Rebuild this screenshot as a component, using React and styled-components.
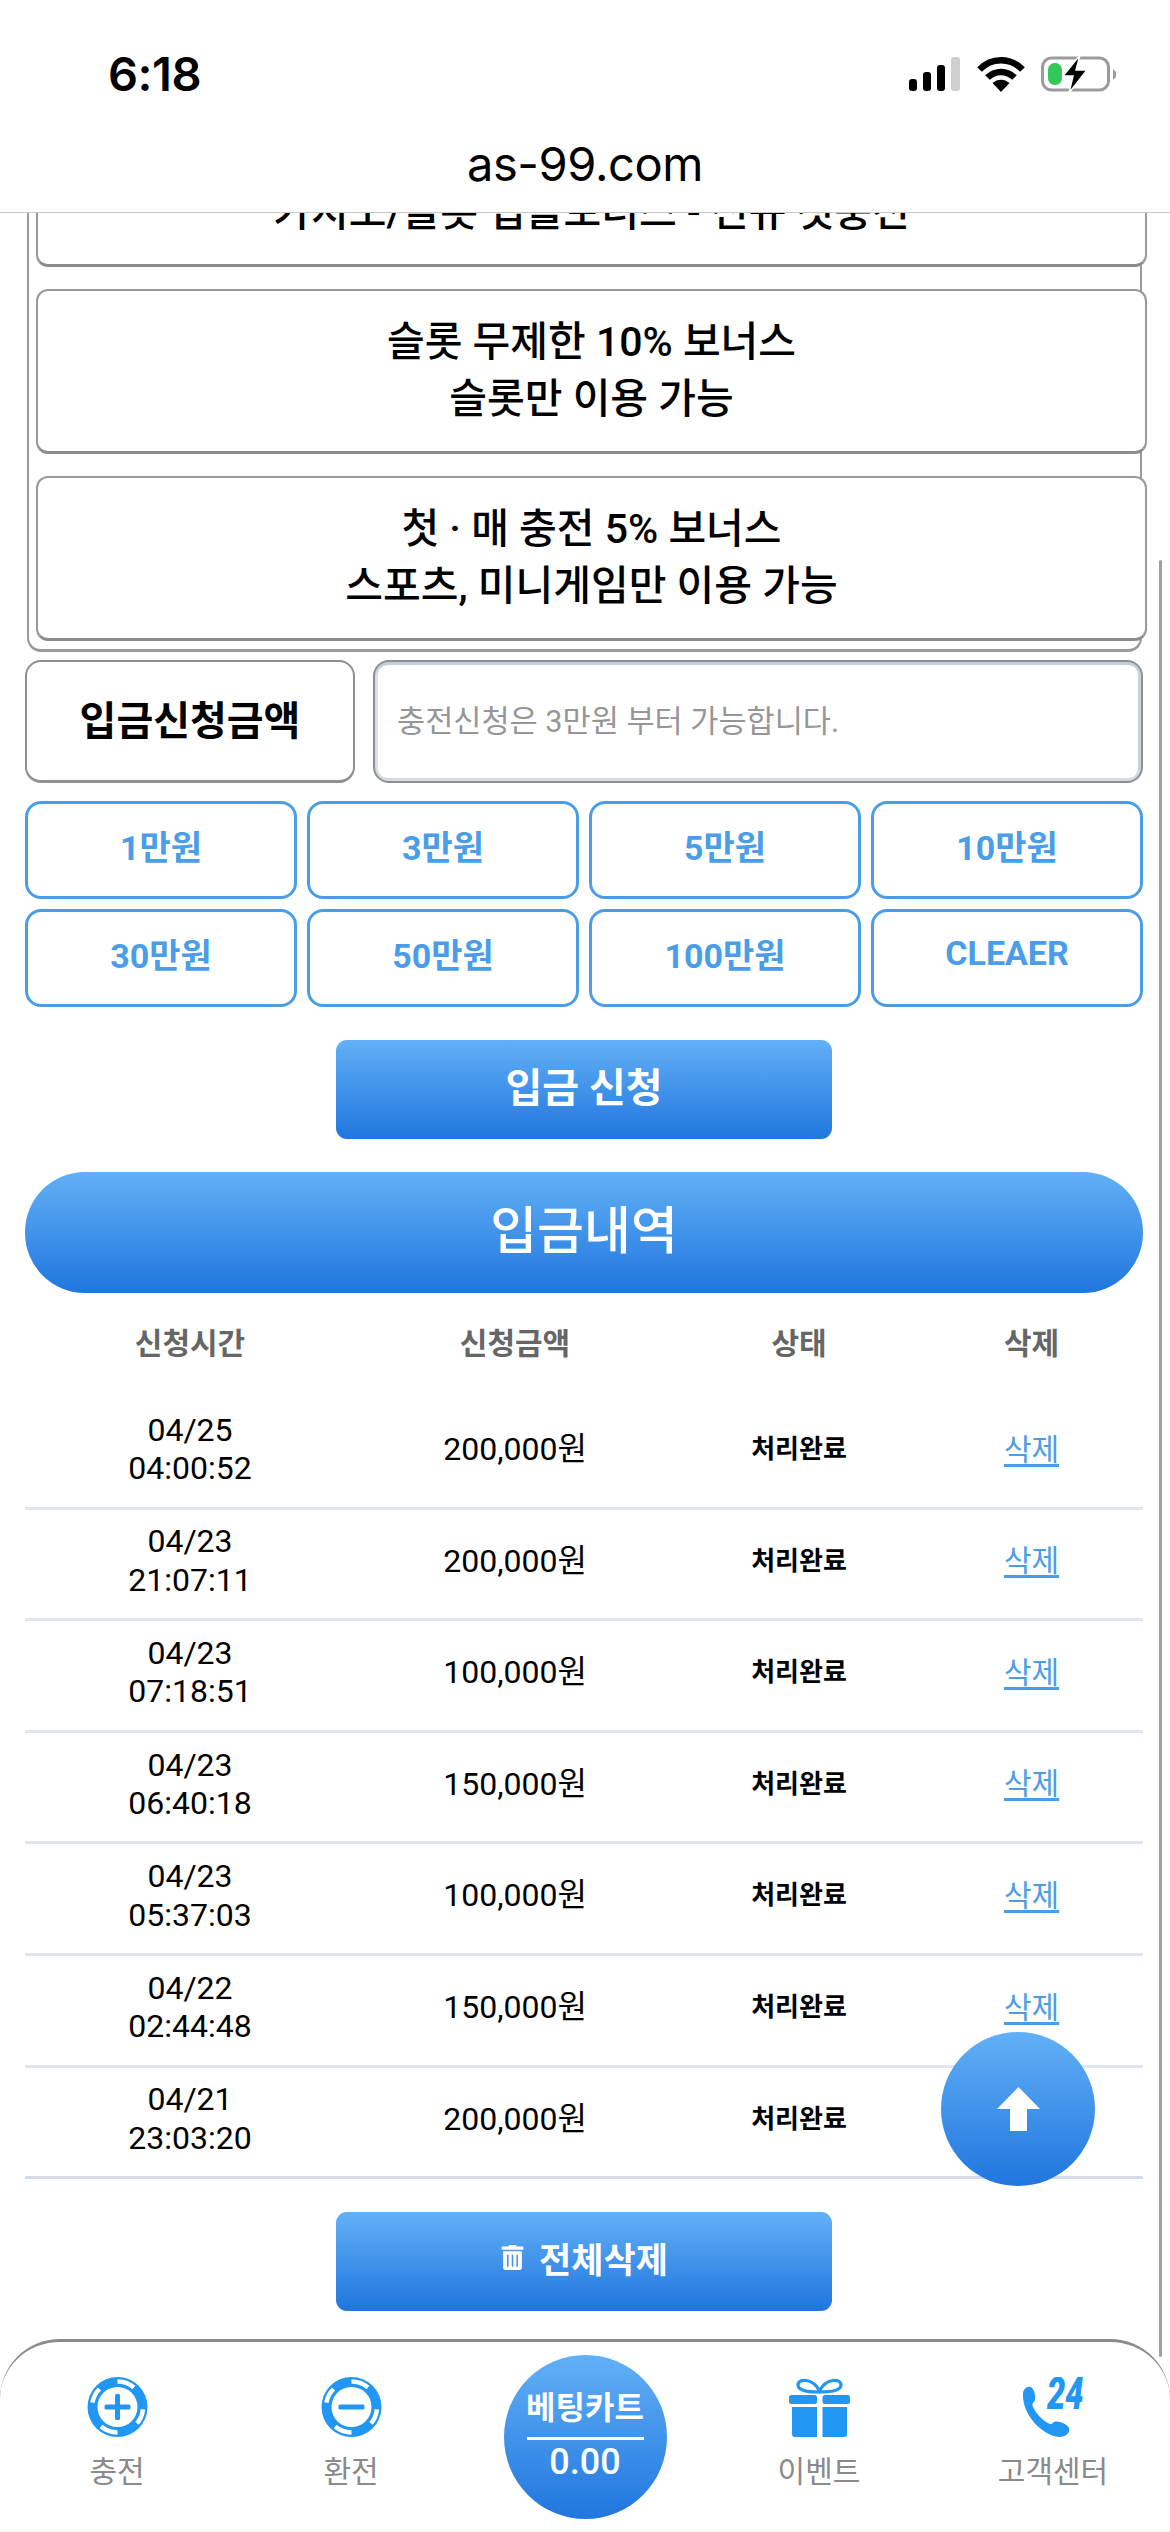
import React from "react";
import styled, { createGlobalStyle } from "styled-components";
import { FaTrashAlt } from "react-icons/fa";

const FONT = `Roboto, "Noto Sans CJK KR", sans-serif`;
const GRAD = "linear-gradient(180deg, #62b0f6 0%, #2076de 100%)";
const BLUE = "#4a9de9";
const ICON = "#2196f3";

const Global = createGlobalStyle`
  html, body { margin: 0; padding: 0; background: #fff; }
  * { box-sizing: border-box; }
  body { font-family: ${FONT}; color: #000; }
`;

const Screen = styled.div`
  position: relative;
  width: 1170px;
  height: 2532px;
  overflow: hidden;
  display: flex;
  flex-direction: column;
  background: #fff;
`;
const BrowserChrome = styled.header`
  height: 213px;
  flex: none;
  background: #fff;
  border-bottom: 1px solid #c9c9c9;
  position: relative;
  z-index: 2;
`;
const StatusBar = styled.div`
  height: 130px;
  padding: 50px 53px 0 108px;
  display: flex;
  justify-content: space-between;
  align-items: flex-start;
`;
const Clock = styled.div`
  font: 600 47px/48px Inter, sans-serif;
  letter-spacing: -0.5px;
`;
const StatusIcons = styled.div`
  display: flex;
  align-items: center;
  gap: 16px;
  margin-top: 5px;
`;
const Address = styled.div`
  text-align: center;
  font: 400 47px/54px Inter, sans-serif;
  letter-spacing: -0.4px;
  margin-top: 7px;
`;
const Scroller = styled.main`
  flex: 1;
  min-height: 0;
  overflow: hidden;
`;
const Page = styled.div`
  margin-top: -111px;
  width: 1143px;
  padding-left: 25px;
`;
const BonusPanel = styled.section`
  margin: 0 1px 0 2px;
  padding: 0 0 8px 7px;
  border: 2px solid #9a9a9a;
  border-top: 0;
  border-bottom-width: 3px;
  border-radius: 0 0 14px 14px;
`;
const BonusList = styled.div`
  display: flex;
  flex-direction: column;
  gap: 22px;
  margin-right: -7px;
`;
const BonusCard = styled.div`
  height: 165px;
  border: 2px solid #9a9a9a;
  border-bottom: 3px solid #8c8c8c;
  border-radius: 12px;
  background: #fff;
  display: flex;
  flex-direction: column;
  align-items: center;
  justify-content: center;
  font-size: 41px;
  line-height: 57px;
  font-weight: 500;
`;
const FormRow = styled.div`
  display: grid;
  grid-template-columns: 330px 1fr;
  gap: 18px;
  height: 123px;
  margin-top: 8px;
`;
const AmountLabel = styled.div`
  border: 2px solid #8f8f8f;
  border-bottom-width: 3px;
  border-radius: 16px;
  display: flex;
  align-items: center;
  justify-content: center;
  font-size: 40px;
  font-weight: 700;
  padding-bottom: 6px;
`;
const AmountInput = styled.input`
  width: 100%;
  height: 100%;
  border: 2px solid #8f8f8f;
  border-radius: 16px;
  box-shadow: inset 0 3px 0 #c4cfdd, inset 0 -3px 0 #d4dbe5, inset 3px 0 0 #dbe1ea, inset -3px 0 0 #c9d2df;
  background: #fff;
  padding: 0 20px 0 22px;
  font: 400 30.6px ${FONT};
  outline: none;
  &::placeholder { color: #969696; opacity: 1; }
`;
const PresetGrid = styled.div`
  display: grid;
  grid-template-columns: repeat(4, 1fr);
  grid-auto-rows: 98px;
  gap: 10px;
  margin-top: 18px;
`;
const Preset = styled.button`
  border: 3px solid ${BLUE};
  border-radius: 16px;
  background: #fff;
  color: ${BLUE};
  font: 700 34px ${FONT};
  padding: 0 0 10px;
`;
const GradientButton = styled.button`
  display: flex;
  align-items: center;
  justify-content: center;
  gap: 14px;
  width: 496px;
  height: 99px;
  margin: ${(p) => p.$mt}px auto 0;
  border: 0;
  border-radius: 11px;
  background: ${GRAD};
  color: #fff;
  font: 700 ${(p) => p.$size}px ${FONT};
  padding: 0 0 9px;
`;
const HistoryTitle = styled.h2`
  margin: 33px 0 0;
  height: 121px;
  border-radius: 60px;
  background: ${GRAD};
  color: #fff;
  font-size: 51px;
  font-weight: 500;
  display: flex;
  align-items: center;
  justify-content: center;
  padding-bottom: 11px;
`;
const COLS = "330px 320px 248px 217px";
const TableHead = styled.div`
  display: grid;
  grid-template-columns: ${COLS};
  height: 105px;
  align-items: center;
  text-align: center;
  color: #666;
  font-size: 30px;
  font-weight: 700;
  padding-bottom: 10px;
`;
const Row = styled.div`
  display: grid;
  grid-template-columns: ${COLS};
  height: 111.6px;
  align-items: center;
  text-align: center;
  border-bottom: 3px solid ${(p) => (p.$last ? "#d3dbe5" : "#e0e7f0")};
  padding-bottom: 6px;
  font-size: 32px;
  line-height: 38.5px;
`;
const Status = styled.div`
  font-size: 26px;
  font-weight: 700;
`;
const DeleteLink = styled.a`
  color: ${BLUE};
  font-size: 30px;
  text-decoration: underline;
  text-underline-offset: 4px;
`;
const BottomNav = styled.nav`
  flex: none;
  height: 193px;
  position: relative;
  z-index: 2;
  background: #fff;
  border-top: 3px solid #8a8a8a;
  border-bottom: 2px solid #f5f5f5;
  border-radius: 60px 60px 0 0;
  display: grid;
  grid-template-columns: repeat(5, 1fr);
  padding-top: 13px;
`;
const Tab = styled.div`
  display: flex;
  flex-direction: column;
  align-items: center;
  padding-top: 22px;
`;
const TabLabel = styled.span`
  margin-top: 15px;
  font-size: 30px;
  line-height: 40px;
  color: #8a8a8a;
`;
const CartCircle = styled.div`
  justify-self: center;
  width: 163px;
  height: 164px;
  border-radius: 50%;
  background: ${GRAD};
  color: #fff;
  display: flex;
  flex-direction: column;
  align-items: center;
  padding-top: 33px;
`;
const CartTitle = styled.div`
  font-size: 32px;
  font-weight: 700;
  line-height: 40px;
`;
const CartRule = styled.div`
  width: 117px;
  height: 3px;
  margin-top: 9px;
  background: #fff;
`;
const CartValue = styled.div`
  font-size: 36px;
  font-weight: 500;
  line-height: 44px;
`;
const TopButton = styled.button`
  position: absolute;
  left: 941px;
  top: 2032px;
  z-index: 1;
  width: 154px;
  height: 154px;
  border: 0;
  border-radius: 50%;
  background: ${GRAD};
  display: flex;
  align-items: center;
  justify-content: center;
  padding: 0;
`;
const ScrollThumb = styled.div`
  position: absolute;
  left: 1159px;
  top: 560px;
  width: 3px;
  height: 1797px;
  border-radius: 2px;
  background: #a0a0a0;
  z-index: 3;
`;

const Signal = () => (
  <svg width="52" height="34" viewBox="0 0 52 34">
    <rect x="0" y="22" width="8" height="12" rx="3" fill="#000" />
    <rect x="14" y="15" width="8" height="19" rx="3" fill="#000" />
    <rect x="28" y="8" width="8" height="26" rx="3" fill="#000" />
    <rect x="42" y="0" width="9" height="34" rx="3" fill="#cfcfcf" />
  </svg>
);
const Wifi = () => (
  <svg width="48" height="36" viewBox="0 0 48 36" fill="none" stroke="#000" strokeWidth="6.5">
    <path d="M2.5 13.5C14.5 1 33.5 1 45.5 13.5" />
    <path d="M10.5 21.5C18 14 30 14 37.5 21.5" />
    <path d="M24 36L15.5 27C20.5 22.5 27.5 22.5 32.5 27Z" fill="#000" stroke="none" />
  </svg>
);
const Battery = () => (
  <svg width="76" height="38" viewBox="0 0 76 38">
    <rect x="1.5" y="3" width="66" height="32" rx="9" fill="none" stroke="#9b9b9b" strokeWidth="3" />
    <path d="M72 14l3 3v5l-3 3z" fill="#9b9b9b" />
    <rect x="7" y="8" width="14" height="22" rx="6.5" fill="#34c759" />
    <path d="M39 0L22 21H32L28 38L46 15H35Z" fill="#000" stroke="#fff" strokeWidth="1.5" />
  </svg>
);

const arc = (r, a, b, cx = 30.5, cy = 30) => {
  const rad = (d) => (d * Math.PI) / 180;
  const p = (d) => `${(cx + r * Math.cos(rad(d))).toFixed(2)} ${(cy + r * Math.sin(rad(d))).toFixed(2)}`;
  return `M${p(a)}A${r} ${r} 0 0 1 ${p(b)}`;
};
const ChipIcon = ({ plus }) => (
  <svg width="61" height="60" viewBox="0 0 61 60">
    <circle cx="30.5" cy="30" r="30" fill={ICON} />
    <circle cx="30.5" cy="30" r="20" fill="#fff" />
    {[[-90, -50], [5, 40], [90, 130], [190, 225]].map(([a, b]) => (
      <path key={a} d={arc(25.5, a, b)} fill="none" stroke="#fff" strokeWidth="4.5" />
    ))}
    <rect x="17.5" y="27.5" width="26" height="5" rx="1.5" fill={ICON} />
    {plus && <rect x="28" y="17" width="5" height="26" rx="1.5" fill={ICON} />}
  </svg>
);
const GiftIcon = () => (
  <svg width="61" height="60" viewBox="0 0 61 60">
    <path d="M30.5 15C24 15 9 15 9 8C9 1 24 1 30.5 14C37 1 52 1 52 8C52 15 37 15 30.5 15Z" fill="none" stroke={ICON} strokeWidth="3.2" />
    <rect x="0" y="18" width="28" height="9" rx="2.5" fill={ICON} />
    <rect x="33.5" y="18" width="27.5" height="9" rx="2.5" fill={ICON} />
    <path d="M3 30H28V60H6Q3 60 3 57Z" fill={ICON} />
    <path d="M33.5 30H58V57Q58 60 55 60H33.5Z" fill={ICON} />
  </svg>
);
const PhoneIcon = () => (
  <svg width="62" height="60" viewBox="0 0 62 60">
    <path d="M1 17C1 12 5 9 8.5 10C12 11 14 19 13 23C12.5 25 10 26 10.5 28.5C13 36 21 44 28 47C30.5 47.5 31 44.5 34 44.5C38 44.5 45 47 47 51C48.5 56 43.5 60 37 60C22 59 0 39 1 17Z" fill={ICON} />
    <text x="25" y="31.5" fill={ICON} fontFamily="Roboto, sans-serif" fontWeight="900" fontSize="44" fontStyle="italic" textLength="36.5" lengthAdjust="spacingAndGlyphs">24</text>
  </svg>
);
const UpArrow = () => (
  <svg width="43" height="44" viewBox="0 0 43 44">
    <path d="M21.5 0L43 22H30V44H13V22H0Z" fill="#fff" />
  </svg>
);

const PRESETS = ["1만원", "3만원", "5만원", "10만원", "30만원", "50만원", "100만원", "CLEAER"];
const ROWS = [
  ["04/25", "04:00:52", "200,000원"],
  ["04/23", "21:07:11", "200,000원"],
  ["04/23", "07:18:51", "100,000원"],
  ["04/23", "06:40:18", "150,000원"],
  ["04/23", "05:37:03", "100,000원"],
  ["04/22", "02:44:48", "150,000원"],
  ["04/21", "23:03:20", "200,000원"],
];
const BONUSES = [
  ["\u00a0", "카지노/슬롯 입플보너스 - 신규 첫충전"],
  ["슬롯 무제한 10% 보너스", "슬롯만 이용 가능"],
  ["첫 · 매 충전 5% 보너스", "스포츠, 미니게임만 이용 가능"],
];

export default function App() {
  return (
    <Screen>
      <Global />
      <BrowserChrome>
        <StatusBar>
          <Clock>6:18</Clock>
          <StatusIcons>
            <Signal />
            <Wifi />
            <Battery />
          </StatusIcons>
        </StatusBar>
        <Address>as-99.com</Address>
      </BrowserChrome>
      <Scroller>
        <Page>
          <BonusPanel>
            <BonusList>
              {BONUSES.map(([a, b], i) => (
                <BonusCard key={i}>
                  <div>{a}</div>
                  <div>{b}</div>
                </BonusCard>
              ))}
            </BonusList>
          </BonusPanel>
          <FormRow>
            <AmountLabel>입금신청금액</AmountLabel>
            <AmountInput placeholder="충전신청은 3만원 부터 가능합니다." />
          </FormRow>
          <PresetGrid>
            {PRESETS.map((p) => (
              <Preset key={p}>{p}</Preset>
            ))}
          </PresetGrid>
          <GradientButton $mt={33} $size={40}>입금 신청</GradientButton>
          <HistoryTitle>입금내역</HistoryTitle>
          <TableHead>
            <div>신청시간</div>
            <div>신청금액</div>
            <div>상태</div>
            <div>삭제</div>
          </TableHead>
          {ROWS.map(([d, t, amt], i) => (
            <Row key={i} $last={i === ROWS.length - 1}>
              <div>{d}<br />{t}</div>
              <div>{amt}</div>
              <Status>처리완료</Status>
              <div><DeleteLink href="#">삭제</DeleteLink></div>
            </Row>
          ))}
          <GradientButton $mt={33} $size={35}>
            <FaTrashAlt size={25} />
            전체삭제
          </GradientButton>
        </Page>
      </Scroller>
      <BottomNav>
        <Tab><ChipIcon plus /><TabLabel>충전</TabLabel></Tab>
        <Tab><ChipIcon /><TabLabel>환전</TabLabel></Tab>
        <CartCircle>
          <CartTitle>베팅카트</CartTitle>
          <CartRule />
          <CartValue>0.00</CartValue>
        </CartCircle>
        <Tab><GiftIcon /><TabLabel>이벤트</TabLabel></Tab>
        <Tab><PhoneIcon /><TabLabel>고객센터</TabLabel></Tab>
      </BottomNav>
      <TopButton aria-label="top"><UpArrow /></TopButton>
      <ScrollThumb />
    </Screen>
  );
}
